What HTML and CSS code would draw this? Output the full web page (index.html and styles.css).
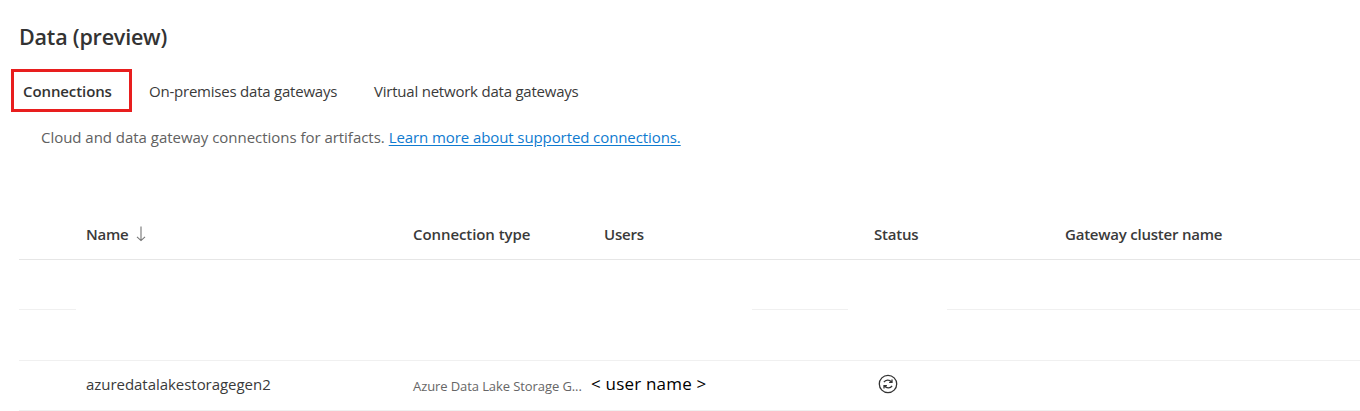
FILE: index.html
```html
<!DOCTYPE html>
<html lang="en">
<head>
<meta charset="utf-8">
<title>Data (preview)</title>
<link rel="stylesheet" href="styles.css">
</head>
<body>
<main class="page">
  <h1 class="title"><span>Data (preview)</span></h1>
  <nav class="tabs">
    <a class="tab tab-active"><span>Connections</span></a>
    <a class="tab tab-gateways"><span>On-premises data gateways</span></a>
    <a class="tab tab-virtual"><span>Virtual network data gateways</span></a>
  </nav>
  <p class="intro"><span class="intro-text">Cloud and data gateway connections for artifacts.</span><a class="link">Learn more about supported connections.</a></p>
  <section class="table">
    <div class="row head">
      <div class="cell name-head"><span>Name</span><svg class="sort" viewBox="0 0 10 16"><path d="M5 0.5V14.5M1 10.8L5 14.6L9 10.8"/></svg></div>
      <div class="cell type-head"><span>Connection type</span></div>
      <div class="cell"><span>Users</span></div>
      <div class="cell"><span>Status</span></div>
      <div class="cell"><span>Gateway cluster name</span></div>
    </div>
    <div class="row blank split">
      <i class="rule"></i><i class="rule"></i><i class="rule"></i>
    </div>
    <div class="row blank"></div>
    <div class="row record">
      <div class="cell name"><span>azuredatalakestoragegen2</span></div>
      <div class="cell type"><span>Azure Data Lake Storage G...</span></div>
      <div class="cell user"><span>&lt; user name &gt;</span></div>
      <div class="cell status"><svg class="sync" viewBox="0 0 20 20"><circle cx="10" cy="10" r="8.7"/><path d="M5.9 8.2C7.6 5.6 11.4 5.4 13.4 7.8M14 5.4V8.3H11.1M14.1 11.8C12.4 14.4 8.6 14.6 6.6 12.2M6 14.6V11.7H8.9"/></svg></div>
      <div class="cell"></div>
    </div>
  </section>
</main>
</body>
</html>
```
FILE: styles.css
```css
* { box-sizing: border-box; }
body { margin: 0; background: #fff; color: #3a3a3a; font: 15px/24px "Open Sans", "Noto Sans", sans-serif; overflow: hidden; }
.page { height: 411px; padding-top: 21px; }
.title { margin: 0 0 16px 19px; font-size: 21.5px; line-height: 32px; font-weight: 600; letter-spacing: -0.2px; color: #333; }
.tabs { display: flex; height: 43px; margin-left: 11px; }
.tab { display: flex; align-items: center; white-space: nowrap; }
.tab-active { width: 121px; padding-left: 9px; border: 3px solid #e81e1e; color: #333; font-weight: 600; letter-spacing: -0.1px; }
.tab-gateways { width: 225px; margin-left: 17px; letter-spacing: -0.22px; }
.tab-virtual { letter-spacing: -0.22px; }
.intro { display: flex; gap: 4px; margin: 13px 0 0 41px; color: #616161; white-space: nowrap; }
.intro-text { letter-spacing: -0.03px; }
.link { color: #0f7bd0; text-decoration: underline; text-underline-offset: 2px; letter-spacing: -0.09px; }
.table { margin: 60px 0 0 19px; }
.row { display: grid; grid-template-columns: 327px 191px 270px 191px 1fr; height: 51px; padding-left: 67px; border-bottom: 1px solid #f0f0f0; }
.cell { display: flex; align-items: center; white-space: nowrap; }
.head { border-color: #e6e6e6; font-weight: 600; }
.head .cell { letter-spacing: -0.22px; }
.head .type-head { letter-spacing: -0.08px; }
.sort { width: 10px; height: 16px; margin-left: 7px; fill: none; stroke: #757575; stroke-width: 1.1; }
.sync { width: 20px; height: 20px; margin-left: 4px; fill: none; stroke: #333; stroke-width: 1.3; }
.split { display: flex; justify-content: flex-start; align-items: flex-end; padding: 0; border: 0; height: 50px; }
.rule { height: 1px; background: #f0f0f0; }
.rule:nth-child(1) { width: 57px; }
.rule:nth-child(2) { width: 96px; margin-left: 676px; }
.rule:nth-child(3) { flex: 1; margin-left: 99px; }
.record { height: 50px; }
.record .cell { padding-bottom: 4px; }
.name { letter-spacing: -0.04px; }
.record .type { padding-bottom: 0; color: #666; font-size: 13px; letter-spacing: -0.09px; }
.user { margin-left: -13px; color: #000; font-size: 17px; letter-spacing: 0.2px; }
```
